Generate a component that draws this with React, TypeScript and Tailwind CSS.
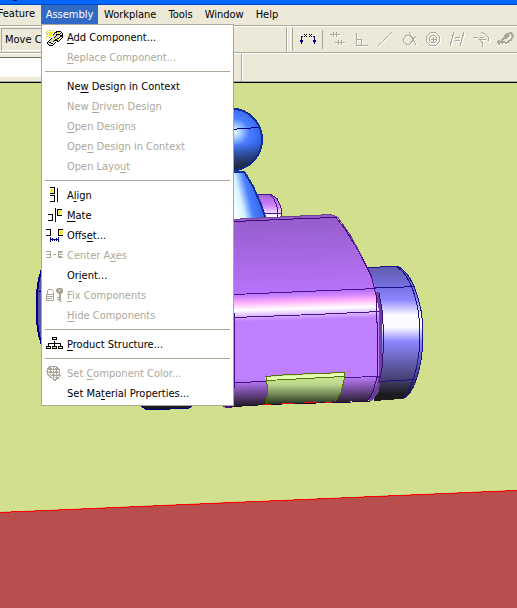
import type { ReactNode } from "react";

interface MenuEntry {
  label: string;
  accessKey: number;
  disabled?: boolean;
  icon?: ReactNode;
}

function WizardIcon() {
  return (
    <>
      <path d="M9 6l3-2h3l2 3-1 3-4 3-4 1-3 3H3l-1-2 3-4 3-2z" fill="#d8d8d0" />
      <path
        d="M8 6.500h1M9 5.500h1M10 4.500h2M11 3.500h5M16 4.500h1M17 5.500h1M17.500 6v4M16 10.500h1M15 11.500h1M14 12.500h1M12 13.500h2M10 14.500h1M9 15.500h1M8 16.500h1M4 17.500h4M3 16.500h1M2.500 14v2M3 13.500h1M4 12.500h1M5 11.500h1M6 10.500h1"
        stroke="#000"
      />
      <path
        d="M11 6.500h4M15.500 7v2M14 9.500h1M12 10.500h2M10 8.500h1M9 9.500h1M11 7.500h1M10 11.500h2M9 12.500h1M8 13.500h1M6 15.500h2M4 14.500h2M10 12.500h3M15 5.500h1M16.500 7v2"
        stroke="#000"
      />
      <path d="M13 4.500h2M8 11.500h1M7 12.500h1M6 13.500h1M9 10.500h1M14 10.500h1M13 11.500h1" stroke="#f0e800" />
      <path
        d="M1 2.500h1M2 3.500h1M5 2.500h1M8 2.500h1M7 3.500h1M3 4.500h5M4 5.500h3M1 6.500h2M4 6.500h3M3 7.500h3M7 7.500h1M2 8.500h1M5 8.500h1M1 10.500h1"
        stroke="#f0e800"
      />
      <path d="M4 2.500h1M1 4.500h1M9 4.500h1M8 7.500h1M1 8.500h1M4 9.500h1M2 5.500h1" stroke="#a8a890" />
    </>
  );
}

function AlignIcon() {
  return (
    <>
      <path d="M5 3h4v5h-4z" fill="#fff27a" />
      <path d="M5 1.500h4.500v6H5M5 9.500h4.500v6H5" fill="none" stroke="#000" />
      <path d="M6 3h1v1h1v1h-1v1h-1z" fill="#f5e400" />
      <path d="M12.500 2v14" stroke="#000080" />
    </>
  );
}

function MateIcon() {
  return (
    <>
      <path d="M13 4h4v5h-4z" fill="#fff27a" />
      <path d="M3 8.500h4.500v6H3M17 3.500h-4.500v6H17" fill="none" stroke="#000" />
      <path d="M14 5h2v1h-1v2h-1z" fill="#f5e400" />
      <path d="M10.500 2v14" stroke="#000080" />
    </>
  );
}

function OffsetIcon() {
  return (
    <>
      <path d="M14 4h4v5h-4z" fill="#fff27a" />
      <path d="M1 3.500h4.500v6H1M18 3.500h-4.500v6H18" fill="none" stroke="#000" />
      <path d="M15 5h2v1h-1v2h-1z" fill="#f5e400" />
      <path d="M5.500 11v5M13.500 11v5M6 13.500h7M7.500 12v3M11.500 12v3M9.500 13v2" stroke="#000080" />
    </>
  );
}

function AxesIcon() {
  return (
    <g fill="none" stroke="#aca899">
      <path d="M1 5.500h4.500v6H1M2 8.500h3M8 8.500h3M18 5.500h-4.500v6H18M14 8.500h4" />
      <path d="M15.500 6v6" strokeDasharray="1 1" strokeWidth="3" />
    </g>
  );
}

function LockKeyIcon() {
  return (
    <g stroke="#aca899">
      <path d="M2.500 8V5l1-1.500h3L8 5v3M1.500 8.500h7v6h-7zM3 10h5M2 12h5" fill="none" />
      <path d="M2 10.500h7M2 12.500h7" strokeDasharray="1 1" />
      <path d="M12 2h5l1 2v2l-2 2h-3l-2-2V4z" fill="#aca899" stroke="none" />
      <path d="M14.500 7v8M15.500 7v9M12 11.500h3M12 13.500h3" />
      <path d="M14 4.500h1" stroke="#fff" />
    </g>
  );
}

function StructureIcon() {
  return (
    <>
      <path d="M9.500 6v5M3.500 11V8.500h12V11" fill="none" stroke="#000" />
      <path
        d="M7.500 2.500h4v2h-4zM1.500 11.500h4v2h-4zM7.500 11.500h4v2h-4zM13.500 11.500h4v2h-4z"
        fill="#fff27a"
        stroke="#000"
      />
    </>
  );
}

function PaletteIcon() {
  return (
    <g fill="none" stroke="#aca899">
      <path d="M5 2.500h6l3 3v4l1 2-2 3-2 1H9l-3-2-3-3-1-3 1-3z" />
      <path d="M3 5.500h11M3 8.500h11M6 11.500h9M5.500 3v8M8.500 3v12M11.500 3v12" />
      <path d="M4 4h8M4 7h10M5 10h10M8 13h6" strokeDasharray="1 1" />
      <path d="M14 8v5l-3 3H9" />
    </g>
  );
}

const menuGroups: MenuEntry[][] = [
  [
    { label: "Add Component...", accessKey: 0, icon: <WizardIcon /> },
    { label: "Replace Component...", accessKey: 0, disabled: true }
  ],
  [
    { label: "New Design in Context", accessKey: 2 },
    { label: "New Driven Design", accessKey: 4, disabled: true },
    { label: "Open Designs", accessKey: 0, disabled: true },
    { label: "Open Design in Context", accessKey: 3, disabled: true },
    { label: "Open Layout", accessKey: 9, disabled: true }
  ],
  [
    { label: "Align", accessKey: 1, icon: <AlignIcon /> },
    { label: "Mate", accessKey: 0, icon: <MateIcon /> },
    { label: "Offset...", accessKey: 4, icon: <OffsetIcon /> },
    { label: "Center Axes", accessKey: 8, disabled: true, icon: <AxesIcon /> },
    { label: "Orient...", accessKey: 2 },
    { label: "Fix Components", accessKey: 0, disabled: true, icon: <LockKeyIcon /> },
    { label: "Hide Components", accessKey: 0, disabled: true }
  ],
  [{ label: "Product Structure...", accessKey: 0, icon: <StructureIcon /> }],
  [
    { label: "Set Component Color...", accessKey: 4, disabled: true, icon: <PaletteIcon /> },
    { label: "Set Material Properties...", accessKey: 6 }
  ]
];

const constraintTools = [
  { name: "Coincident", path: "M1 3.500h10M4.500 1v5M7.500 1v5M6 11.500h10M9.500 9v5M12.500 9v5" },
  { name: "Perpendicular", path: "M3.500 2v12.500H15M3.500 8.500h5v6" },
  { name: "Collinear", path: "M1 15l4-4M6 10l5-5M12 4l3-3" },
  { name: "Tangent", path: "M5 4.500h4l2.500 3v3l-3 3h-3l-3-3v-3zM8 1l7 13M15 5l-7 9" },
  {
    name: "Concentric",
    path: "M5.500 1.500h5l4 4v5l-4 4h-5l-4-4v-5zM6.500 4.500h3l2 2v3l-2 2h-3l-2-2v-3zM6 8.500h5M8.500 6v5"
  },
  { name: "Parallel", path: "M5 1L1 15M15 1l-4 14M6 6.500h5M6 9.500h5" },
  { name: "Symmetric", path: "M8 1l4 2 3 3 1 4M0 6.500h4l3 2 2 3 1 4M7 6.500h4M8 8.500h5" }
];

function MenuItem({ entry }: { entry: MenuEntry }) {
  const { label, accessKey, disabled, icon } = entry;
  return (
    <button
      role="menuitem"
      disabled={disabled}
      className="flex h-5 w-full items-center gap-[2px] pl-[1px] text-left text-black disabled:text-[#aca899]"
    >
      <svg width="20" height="20" shapeRendering="crispEdges" className="shrink-0" aria-hidden="true">
        {icon}
      </svg>
      <span className="whitespace-nowrap">
        {label.slice(0, accessKey)}
        <span className="underline underline-offset-2">{label[accessKey]}</span>
        {label.slice(accessKey + 1)}
      </span>
    </button>
  );
}

function AssemblyMenu() {
  return (
    <div
      role="menu"
      aria-label="Assembly"
      className="absolute left-0 top-[19px] z-10 w-[193px] border border-[#aca899] bg-white px-[2px] pb-[1px] pt-[3px]"
    >
      {menuGroups.map((group, index) => (
        <div key={group[0].label}>
          {index > 0 && <hr className="mx-[1px] mb-[5px] mt-[3px] border-[#aca899]" />}
          {group.map((entry) => (
            <MenuItem key={entry.label} entry={entry} />
          ))}
        </div>
      ))}
    </div>
  );
}

function MenuBar() {
  return (
    <nav className="flex h-5 items-stretch">
      <button className="flex w-[41px] justify-end overflow-hidden pr-[6px] leading-[18px]">Feature</button>
      <div className="relative">
        <button aria-expanded="true" className="h-[19px] w-[57px] bg-[#316ac5] leading-[18px] text-white">
          Assembly
        </button>
        <AssemblyMenu />
      </div>
      <button className="px-[6px] leading-[18px]">Workplane</button>
      <button className="px-[6px] leading-[18px]">Tools</button>
      <button className="px-[6px] leading-[18px]">Window</button>
      <button className="px-[6px] leading-[18px]">Help</button>
    </nav>
  );
}

function Toolbar() {
  return (
    <div className="flex h-[27px] items-center overflow-hidden border-b border-t border-b-[#aca899] border-t-white">
      <div className="flex h-full w-[287px] shrink-0 items-center border-r border-[#aca899] pl-[1px]">
        <div className="h-[23px] w-[150px] border border-b-white border-l-[#aca899] border-r-white border-t-[#aca899] pl-[3px] leading-[22px]">
          Move C
        </div>
      </div>
      <div className="h-full w-[1px] shrink-0 bg-white" />
      <div className="ml-[2px] h-[23px] w-[3px] shrink-0 border-l border-r border-l-white border-r-[#aca899]" />
      <button aria-label="Dimension" className="ml-[3px] flex h-[23px] w-6 shrink-0 items-center justify-center">
        <svg width="16" height="16" shapeRendering="crispEdges" fill="none">
          <path
            d="M4 2.500h1M6 2.500h1M5 3.500h1M4 4.500h1M6 4.500h1M9 2.500h1M11 2.500h1M10 3.500h1M9 4.500h1M11 4.500h1"
            stroke="#000"
          />
          <path d="M3 4.500H1.500V12M13 4.500h1.500V12" stroke="#000080" />
          <path d="M0 8h3v2H0zM13 8h3v2h-3z" fill="#000080" />
        </svg>
      </button>
      <div className="ml-[2px] mr-[3px] h-[19px] w-[1px] shrink-0 bg-[#aca899]" />
      {constraintTools.map((tool) => (
        <button
          key={tool.name}
          disabled
          aria-label={tool.name}
          className="flex h-[23px] w-6 shrink-0 items-center justify-center"
        >
          <svg width="18" height="18" shapeRendering="crispEdges" fill="none">
            <path d={tool.path} stroke="#fff" transform="translate(1 1)" />
            <path d={tool.path} stroke="#aca899" />
          </svg>
        </button>
      ))}
      <button disabled aria-label="Fasten" className="flex h-[23px] w-6 shrink-0 items-center pl-[2px]">
        <svg width="18" height="18" shapeRendering="crispEdges" fill="none">
          <path d="M2 15l4-3 3 1 6-4 2-4" stroke="#fff" strokeWidth="2" />
          <path
            d="M1 11h7M3 9v5M6 8v5M6 9l5-6 4-1 2 3-2 4-5 3-2-1M9 8l4-4"
            stroke="#aca899"
            strokeWidth="2"
          />
        </svg>
      </button>
    </div>
  );
}

function Viewport() {
  return (
    <svg viewBox="0 83 517 525" className="block w-full bg-[#d2df8c]" role="img" aria-label="3D assembly view">
      <defs>
        <radialGradient id="head" gradientUnits="userSpaceOnUse" cx="235" cy="132" r="34">
          <stop offset="0" stopColor="#f0ffff" />
          <stop offset="0.200" stopColor="#9cc6ff" />
          <stop offset="0.400" stopColor="#4d80ff" />
          <stop offset="0.650" stopColor="#3c6cf5" />
          <stop offset="1" stopColor="#2f55c0" />
        </radialGradient>
        <linearGradient id="headShade" x1="0" y1="0" x2="0" y2="1">
          <stop offset="0.550" stopColor="#202830" stopOpacity="0" />
          <stop offset="1" stopColor="#202028" />
        </linearGradient>
        <linearGradient id="neck" gradientUnits="userSpaceOnUse" x1="234" y1="203" x2="262" y2="196">
          <stop offset="0" stopColor="#f4ffff" />
          <stop offset="0.250" stopColor="#d6f2ff" />
          <stop offset="0.550" stopColor="#4a80ff" />
          <stop offset="1" stopColor="#315be0" />
        </linearGradient>
        <linearGradient id="pin" x1="0" y1="0" x2="0" y2="1">
          <stop offset="0" stopColor="#9b60cc" />
          <stop offset="0.450" stopColor="#cf85ff" />
          <stop offset="0.850" stopColor="#fff" />
          <stop offset="1" stopColor="#e2b8ff" />
        </linearGradient>
        <linearGradient id="body" gradientUnits="userSpaceOnUse" x1="300" y1="217" x2="305" y2="404">
          <stop offset="0" stopColor="#955dcb" />
          <stop offset="0.400" stopColor="#b972fa" />
          <stop offset="0.420" stopColor="#cf85ff" />
          <stop offset="0.450" stopColor="#ffb0f8" />
          <stop offset="0.490" stopColor="#fff" />
          <stop offset="0.530" stopColor="#d3a5ff" />
          <stop offset="0.550" stopColor="#bf80ff" />
          <stop offset="0.860" stopColor="#bf80ff" />
          <stop offset="0.920" stopColor="#7e51a9" />
          <stop offset="1" stopColor="#241c28" />
        </linearGradient>
        <linearGradient id="wheel" x1="0" y1="0" x2="0" y2="1">
          <stop offset="0" stopColor="#605cad" />
          <stop offset="0.150" stopColor="#7770e0" />
          <stop offset="0.250" stopColor="#8c85ff" />
          <stop offset="0.360" stopColor="#f9f8ff" />
          <stop offset="0.450" stopColor="#fff" />
          <stop offset="0.560" stopColor="#8c86ff" />
          <stop offset="0.840" stopColor="#45406f" />
          <stop offset="0.950" stopColor="#1b1b1d" />
          <stop offset="1" stopColor="#1b1b1b" />
        </linearGradient>
        <linearGradient id="hatch" x1="0" y1="0" x2="0" y2="1">
          <stop offset="0" stopColor="#d5f69c" />
          <stop offset="0.400" stopColor="#b8d58a" />
          <stop offset="0.900" stopColor="#405033" />
          <stop offset="1" stopColor="#263020" />
        </linearGradient>
      </defs>

      <path d="M0 512L517 490V608H0z" fill="#b84e4e" />
      <path d="M0 512.500L517 490.500" stroke="#f00" shapeRendering="crispEdges" />

      <g shapeRendering="crispEdges">
        <path d="M43 265l-4 14-2 13v30l2 13 4 14z" fill="#5856a8" stroke="#000080" strokeWidth="2" />
        <path d="M36 291.500h6" stroke="#000080" />
        <path d="M138 403l7 6h25l1-1h18l6-4z" fill="#1b1b1f" stroke="#000080" />
        <path d="M220 405l6 3 12-1v-4z" fill="#48108c" />

        <circle cx="231" cy="139.500" r="32" fill="url(#head)" />
        <circle cx="231" cy="139.500" r="32" fill="url(#headShade)" />
        <circle cx="231" cy="139.500" r="31" fill="none" stroke="#102e92" strokeWidth="2" />
        <path d="M231 129.500l13-1 14-1" stroke="#000080" fill="none" />

        <path d="M257 194h14l6 4 4 9 1 13h-20z" fill="url(#pin)" />
        <path d="M257 194.500h14l6 4 4 9 1 11M269 194l5 5 3 8 1 11M263 213.500h19" fill="none" stroke="#48108c" />
        <path d="M228 171h17l8 14 8 19 6 17h-39z" fill="url(#neck)" />
        <path d="M233 171.500h11l9 15 8 18 5 15" fill="none" stroke="#132f9b" strokeWidth="2" />

        <path d="M365 268l30-2C410 268 423 300 423 334C423 368 413 398 401 399L374 401z" fill="url(#wheel)" />
        <path
          d="M366 268l29-2C410 268 423 300 423 334C423 368 413 398 401 399M375 287.500h18l22-1M379 381.500l38-2"
          fill="none"
          stroke="#171487"
        />
        <path d="M397 267C411 275 420 305 420 334C420 360 414 385 404 397" fill="none" stroke="#171487" />

        <path
          d="M230 220l101-5 6 3 12 16 11 18 10 20 6 17 4 16 1 35-1 35-4 16-8 10-71 2-67 4z"
          fill="url(#body)"
        />
        <path d="M377 292l3 16v68l-3 16-7 9" fill="none" stroke="#704096" strokeWidth="3" />
        <path d="M234 221.500l71-3 31-1 10 13 14 23 11 22 5 19 1 28v55l-4 14-6 10" fill="none" stroke="#3d087b" />
        <path d="M230 219.500l101-5 7 3 12 17 12 22" fill="none" stroke="#70458e" />
        <path d="M379 293l3 17 2 28-2 30-3 15" fill="none" stroke="#301078" />
        <path
          d="M234 294.500l70-3 50-2 22-1M234 317.500l80-3 66-3M234 382.500l34-1 76-4 36-1M234.500 313v75"
          fill="none"
          stroke="#48108c"
        />
        <path d="M234 406.500l32-2 68-2 36-1" stroke="#200638" fill="none" />

        <path d="M265 376l24-2 56-2-1 9-3 11-5 8-6 2-64 2 2-12z" fill="url(#hatch)" />
        <path d="M266 377l79-4-1 4-77 4z" fill="#e7ffb5" />
        <path
          d="M265 376.500l24-2 56-2-1 8-3 12-6 9M266 376l2 16-2 12M267 380.500l77-4"
          fill="none"
          stroke="#527400"
        />
        <path d="M263 404.500h8M282 403.500h12M304 402.500h13M325 402.500h7" stroke="#f00" />
      </g>
    </svg>
  );
}

export default function App() {
  return (
    <div className="flex min-h-screen flex-col bg-[#d2df8c] font-['Tahoma','DejaVu_Sans_Condensed','DejaVu_Sans',sans-serif] text-[11px]">
      <header className="bg-[#ece9d8] text-black">
        <div className="h-[5px] border-b border-[#0047c8] bg-[#0066ff]">
          <div className="ml-[13px] h-[1px] w-1 bg-[#001050]" />
        </div>
        <MenuBar />
        <div className="h-[1px] bg-[#aca899]" />
        <Toolbar />
        <div className="flex h-7 items-stretch border-t border-white">
          <div className="flex w-[242px] items-center border-r border-[#aca899]">
            <input
              aria-label="Command"
              className="h-[21px] w-[180px] border border-b-[#ece9d8] border-l-0 border-r-[#ece9d8] border-t-[#716f64] bg-white px-1 outline-none"
            />
          </div>
          <div className="w-[1px] bg-white" />
        </div>
        <div className="h-[2px] border-t border-[#aca899] bg-black" />
      </header>
      <main>
        <Viewport />
      </main>
    </div>
  );
}
